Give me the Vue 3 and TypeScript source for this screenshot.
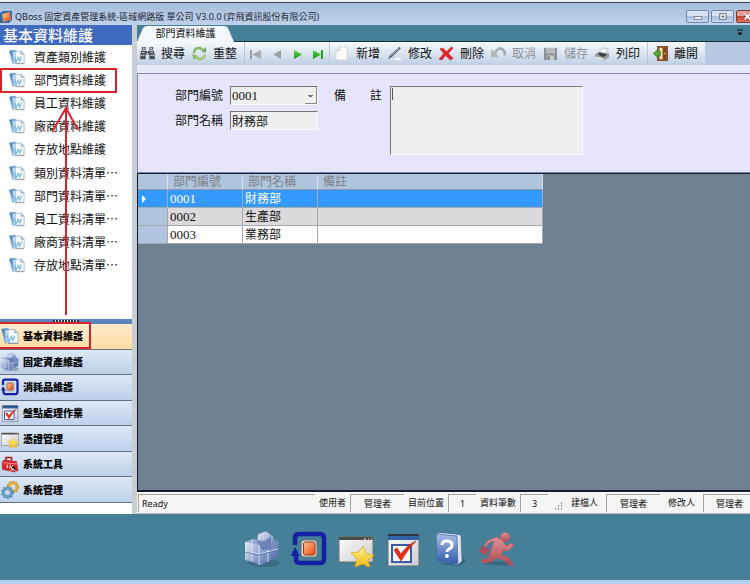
<script setup lang="ts">
import { ref } from 'vue'

interface Tool { icon: string; label: string; disabled?: boolean }
interface Section { icon: string; label: string }
interface Department { code: string; name: string; note: string }

const pages: string[] = [
  '資產類別維護', '部門資料維護', '員工資料維護', '廠商資料維護', '存放地點維護',
  '類別資料清單…', '部門資料清單…', '員工資料清單…', '廠商資料清單…', '存放地點清單…',
]

const sections: Section[] = [
  { icon: 'docs', label: '基本資料維護' },
  { icon: 'cube', label: '固定資產維護' },
  { icon: 'loop', label: '消耗品維護' },
  { icon: 'check', label: '盤點處理作業' },
  { icon: 'star', label: '憑證管理' },
  { icon: 'toolbox', label: '系統工具' },
  { icon: 'gears', label: '系統管理' },
]

const findTools: Tool[] = [
  { icon: 'find', label: '搜尋' },
  { icon: 'refresh', label: '重整' },
]

const moveTools: Tool[] = [
  { icon: 'first', label: '第一筆', disabled: true },
  { icon: 'prev', label: '上一筆', disabled: true },
  { icon: 'next', label: '下一筆' },
  { icon: 'last', label: '最後一筆' },
]

const editTools: Tool[] = [
  { icon: 'new', label: '新增' },
  { icon: 'pen', label: '修改' },
  { icon: 'delete', label: '刪除' },
  { icon: 'undo', label: '取消', disabled: true },
  { icon: 'save', label: '儲存', disabled: true },
  { icon: 'print', label: '列印' },
]

const exitTools: Tool[] = [{ icon: 'door', label: '離開' }]

const dock: Section[] = [
  { icon: 'cube', label: '固定資產' },
  { icon: 'loop', label: '消耗品' },
  { icon: 'star', label: '憑證' },
  { icon: 'check', label: '盤點' },
  { icon: 'help', label: '說明' },
  { icon: 'run', label: '離開系統' },
]

const departments: Department[] = [
  { code: '0001', name: '財務部', note: '' },
  { code: '0002', name: '生產部', note: '' },
  { code: '0003', name: '業務部', note: '' },
]

const activeSection = ref(0)
const selected = ref(0)
</script>

<template>
  <div class="app">
    <svg class="sprite" width="0" height="0" aria-hidden="true">
      <defs>
        <linearGradient id="gBlue" x1="0" y1="0" x2="1" y2="1"><stop offset="0" stop-color="#e3ecfb" /><stop offset="1" stop-color="#7288bd" /></linearGradient>
        <linearGradient id="gBlueDark" x1="0" y1="0" x2="1" y2="1"><stop offset="0" stop-color="#a9bbe2" /><stop offset="1" stop-color="#45609c" /></linearGradient>
        <linearGradient id="gOrange" x1="0" y1="0" x2="1" y2="1"><stop offset="0" stop-color="#ffc29a" /><stop offset="1" stop-color="#ea4a10" /></linearGradient>
        <linearGradient id="gPane" x1="0" y1="0" x2="1" y2="1"><stop offset="0" stop-color="#ffffff" /><stop offset="1" stop-color="#c9cacd" /></linearGradient>
        <linearGradient id="gBook" x1="0" y1="0" x2="0" y2="1"><stop offset="0" stop-color="#a6bfe6" /><stop offset="1" stop-color="#2f5ba6" /></linearGradient>
        <linearGradient id="gRed" x1="0" y1="0" x2="0" y2="1"><stop offset="0" stop-color="#df9298" /><stop offset="1" stop-color="#ae4750" /></linearGradient>
        <linearGradient id="gStar" x1="0" y1="0" x2="0" y2="1"><stop offset="0" stop-color="#fff59a" /><stop offset="1" stop-color="#f3b707" /></linearGradient>
        <linearGradient id="gGreen" x1="0" y1="0" x2="0" y2="1"><stop offset="0" stop-color="#63d84a" /><stop offset="1" stop-color="#17950f" /></linearGradient>
        <linearGradient id="gDoc" x1="0" y1="0" x2="1" y2="1"><stop offset="0" stop-color="#2d73b6" /><stop offset="1" stop-color="#b9def5" /></linearGradient>
      </defs>
      <symbol id="docs" viewBox="0 0 36 36">
        <path d="M1 4 13 2l4 3-6 27-3 1z" fill="url(#gDoc)" stroke="#7faed3" />
        <path d="M8 6h12v25H11z" fill="#cfe4f4" stroke="#86aed0" />
        <path d="M14 5h13l7 7v20H14z" fill="#f5fafe" stroke="#8ba6bd" stroke-width="1.5" />
        <path d="M27 5v7h7z" fill="#abc5da" stroke="#8ba6bd" />
        <path d="m12 17 4 12 5-10 3 8 4-10" fill="none" stroke="#72b4e3" stroke-width="2.5" />
        <path d="M14 33h20" stroke="#8e9aa4" stroke-width="2" />
      </symbol>
      <symbol id="cube" viewBox="0 0 36 36">
        <ellipse cx="20" cy="32" rx="16" ry="4" fill="#234a5c" opacity=".35" />
        <path d="m1 11 8-3 10 2 8-3 8 4-1 15-18 8L1 29z" fill="url(#gBlueDark)" />
        <path d="m1 11 14 3v18L1 29z" fill="url(#gBlue)" />
        <path d="m15 14 19-4v16l-18 8z" fill="url(#gBlueDark)" />
        <path d="m14 3 8-3 8 6-3 13-9-2-5-8z" fill="url(#gBlue)" stroke="#6478a7" stroke-width=".6" />
        <path d="m13 9 8 1 6-5v12l-9 2z" fill="#5c76ad" opacity=".75" />
        <path d="m1 20 14 3 19-5M8 9v21M15 14v20M24 19v12" fill="none" stroke="#dfe7f7" stroke-width=".9" />
        <path d="m1 21 14 3 19-5" fill="none" stroke="#536b9d" stroke-width=".7" />
      </symbol>
      <symbol id="loop" viewBox="0 0 36 36">
        <path d="M4 14V7q0-4 4-4h21q4 0 4 4v21q0 4-4 4H9q-4 0-4-4v-4" fill="none" stroke="#1420a4" stroke-width="4.5" />
        <path d="m4 16 5 9H0z" fill="#1420a4" />
        <rect x="10" y="9" width="16" height="17" rx="3" fill="#d6dcd9" stroke="#68777a" />
        <rect x="12.5" y="11" width="11.5" height="13" rx="2" fill="url(#gOrange)" stroke="#9b3915" />
      </symbol>
      <symbol id="star" viewBox="0 0 36 36">
        <path d="M1 6h34v25H1z" fill="url(#gPane)" stroke="#77726a" />
        <path d="M1 6h34v3H1z" fill="#4e4c49" />
        <path d="M26 8h2m2 0h1m2 0h1" stroke="#fff" />
        <path d="m25 15 3 8 8 1-6 5 2 8-7-4-8 3 2-8-6-6 8-1z" fill="url(#gStar)" stroke="#d9a71b" stroke-width=".8" />
      </symbol>
      <symbol id="check" viewBox="0 0 36 36">
        <path d="M3 4h31v31H3z" fill="url(#gPane)" stroke="#606d7a" />
        <path d="M3 4h31v5H3z" fill="#2f65a6" /><path d="M3 3h31v2H3z" fill="#303845" />
        <path d="M7 14h19v17H7z" fill="#fbfbff" stroke="#3e59a5" stroke-width="2" />
        <path d="m9 19 3-2 4 6Q22 14 31 10q-8 8-15 20z" fill="#e62d17" stroke="#a51f13" stroke-width=".6" />
      </symbol>
      <symbol id="help" viewBox="0 0 36 36">
        <path d="m8 33 20 2 6-5-2-3z" fill="#1e4655" opacity=".45" />
        <path d="m4 3 8-1 17 2 1 26-4 4-4-1z" fill="#eef3fa" stroke="#4a68a4" stroke-width=".8" />
        <path d="m4 3 3-1 20 2-2 1z" fill="#dce6f4" />
        <path d="m4 3 21 2 1 28-21-3z" fill="url(#gBook)" stroke="#416aa9" stroke-width=".8" />
        <path d="M28 6v25" stroke="#a7b6cd" stroke-width=".6" />
        <path d="M10 14q0-4 5-4t5 4q0 3-3 4-2 1-2 3" fill="none" stroke="#fff" stroke-width="3" /><circle cx="15" cy="25" r="1.9" fill="#fff" />
      </symbol>
      <symbol id="run" viewBox="0 0 36 36">
        <path d="m2 33 10-3 22 1-4 4z" fill="#28475a" opacity=".4" />
        <circle cx="26" cy="6" r="4.5" fill="url(#gRed)" stroke="#ba6d75" stroke-width=".6" />
        <path d="m10 9 8-3 6 4 3 5 5-3 3 2-6 6-5-1-2 5 7 2 4 6 1 3-4-1-5-5-8-2-5 4-8 1-2-3 7-1 4-12 2-6-4 1-4 5-2-2z" fill="url(#gRed)" stroke="#b85a64" stroke-width=".8" />
        <path d="m3 15 7 3-3 6-7-3z" fill="#b44d57" />
      </symbol>
      <symbol id="toolbox" viewBox="0 0 36 36">
        <path d="M10 11V5h11v6" fill="none" stroke="#9c1b20" stroke-width="3" />
        <path d="m2 14 5-4 24 3 3 18-5 3-26-5z" fill="#d9262d" stroke="#8d1018" />
        <path d="m3 15 29 3" stroke="#ff8b80" stroke-width="2" />
        <path d="m12 19 1 7m6-7-2 8m8-7-5 6 11 7m-6-7-6 6" stroke="#eee" stroke-width="2" />
      </symbol>
      <symbol id="gears" viewBox="0 0 36 36">
        <circle cx="24" cy="12" r="8" fill="none" stroke="#dfb443" stroke-width="6" />
        <circle cx="24" cy="12" r="11" fill="none" stroke="#cc9b2f" stroke-width="3" stroke-dasharray="4 3" />
        <circle cx="13" cy="23" r="8" fill="none" stroke="#6ba0c6" stroke-width="6" />
        <circle cx="13" cy="23" r="11" fill="none" stroke="#4b83ac" stroke-width="3" stroke-dasharray="4 3" />
      </symbol>
      <symbol id="find" viewBox="0 0 16 16">
        <path d="M2 1h4v3H2zm8 0h4v3h-4zM1 5h6l1 2 1-2h6l1 9h-6V9H6v5H0z" fill="#4c5058" />
        <path d="M1 10h4M11 10h4M2 7h3m6 0h3M7 8h2" stroke="#c7ccd2" /><circle cx="4" cy="2.5" r="1" fill="#ddd" /><circle cx="12" cy="2.5" r="1" fill="#ddd" />
      </symbol>
      <symbol id="refresh" viewBox="0 0 16 16">
        <path d="M2 8Q2 2 8 2l4 2" fill="none" stroke="#8dbb73" stroke-width="3" /><path d="m10 6 5 1V1z" fill="#74a95b" />
        <path d="M14 9q-1 5-6 5l-4-2" fill="none" stroke="#a2ca7e" stroke-width="3" /><path d="M6 10 0 9l2 6z" fill="#8abb60" />
      </symbol>
      <symbol id="first" viewBox="0 0 16 16"><path d="M3 4v9" stroke="#9a9da1" stroke-width="2" /><path d="M13 4v9L4 8.5z" fill="#a9abae" /></symbol>
      <symbol id="prev" viewBox="0 0 16 16"><path d="M12 4v9L4 8.5z" fill="#9da1a5" /></symbol>
      <symbol id="next" viewBox="0 0 16 16"><path d="M4 4v9l8-4.5z" fill="url(#gGreen)" /></symbol>
      <symbol id="last" viewBox="0 0 16 16"><path d="M2 4v9l8-4.5z" fill="url(#gGreen)" /><path d="M11 4v9" stroke="#22a51a" stroke-width="2" /></symbol>
      <symbol id="new" viewBox="0 0 16 16"><path d="M5 1h8v14H1V5z" fill="#fcfcfa" stroke="#d3d5d8" /><path d="M5 1v4H1" fill="#e5e5e5" stroke="#c8c8c8" /></symbol>
      <symbol id="pen" viewBox="0 0 16 16"><path d="M8 14h7" stroke="#fff" stroke-width="2" /><path d="m1 14 2-4L13 1l2 1-9 9z" fill="#4f5966" /><path d="M4 11 13 2" stroke="#bbc5d0" /></symbol>
      <symbol id="delete" viewBox="0 0 16 16"><path d="m1 3 3-1 4 4 5-5 2 1-5 6 5 5-3 2-5-5-4 5-3-1 5-6z" fill="#e32529" stroke="#a81c22" stroke-width=".5" /></symbol>
      <symbol id="undo" viewBox="0 0 16 16"><path d="M4 8Q7 2 11 3q4 1 4 7" fill="none" stroke="#a9adaf" stroke-width="3" /><path d="M0 3v9h9z" fill="#b5b8b8" /></symbol>
      <symbol id="save" viewBox="0 0 16 16"><path d="M1 2h14v13H1z" fill="#8b8e92" /><path d="M3 2h10v6H3z" fill="#b8babc" /><path d="M4 10h8v5H4z" fill="#c7c8ca" /><path d="M5 11h2v4H5z" fill="#777" /></symbol>
      <symbol id="print" viewBox="0 0 16 16"><path d="m4 7 4-5 6 1-3 6z" fill="#f7f7f7" stroke="#999" stroke-width=".6" /><path d="m0 9 4-3 11 2v4l-5 3-10-3z" fill="#9a9da0" /><path d="m3 9 2-2 8 2-4 3z" fill="#3d4145" /><path d="m1 12 8 2" stroke="#eee" stroke-width="1.5" /></symbol>
      <symbol id="door" viewBox="0 0 16 16"><path d="M5 0h11v16H5z" fill="#9b6038" stroke="#5e3821" /><path d="M7 2h3v12H7z" fill="#fae3aa" /><path d="M11 2h3v12h-3z" fill="#7a472b" /><path d="M12 8h1" stroke="#ffd45a" stroke-width="2" /><path d="M5 4v2h3v4H5v2L0 8z" fill="#54ab35" stroke="#2b7821" stroke-width=".6" /></symbol>
    </svg>

    <header class="titlebar">
      <svg class="logo" viewBox="0 0 12 12" aria-hidden="true">
        <path d="M0 2 3 0h9v9l-3 3H0z" fill="#2f6ca6" /><path d="m2 3 8-2 1 8-8 2z" fill="url(#gOrange)" /><path d="m3 4 5-2-3 6z" fill="#ffad54" />
      </svg>
      <h1>QBoss 固定資產管理系統-區域網路版 單公司 V3.0.0 (弈飛資訊股份有限公司)</h1>
      <div class="window-buttons">
        <button type="button" aria-label="最小化"><svg viewBox="0 0 22 12"><rect x="7.5" y="6" width="8" height="3" fill="#fff" stroke="#59687b" stroke-width=".8" /></svg></button>
        <button type="button" aria-label="最大化"><svg viewBox="0 0 22 12"><rect x="8" y="3" width="7" height="6" fill="#fff" stroke="#59687b" /><path d="M10 5h3v2h-3z" fill="#59687b" /></svg></button>
        <button type="button" class="close" aria-label="關閉"><svg viewBox="0 0 22 12"><path d="m8 3 6 6m0-6-6 6" stroke="#6a3a3b" stroke-width="3" /><path d="m8 3 6 6m0-6-6 6" stroke="#fff" stroke-width="2" /></svg></button>
      </div>
    </header>

    <div class="body">
      <aside class="sidebar">
        <h2>基本資料維護</h2>
        <nav class="pages">
          <a v-for="page in pages" :key="page" href="#">
            <svg aria-hidden="true"><use href="#docs" /></svg>{{ page }}
          </a>
        </nav>
        <div class="grabber"></div>
        <nav class="sections">
          <button
            v-for="(section, i) in sections"
            :key="section.label"
            type="button"
            :class="{ active: i === activeSection }"
            @click="activeSection = i"
          >
            <svg aria-hidden="true"><use :href="'#' + section.icon" /></svg>{{ section.label }}
          </button>
        </nav>
      </aside>

      <main class="content">
        <div class="tabs">
          <button type="button" class="tab">
            <svg class="tab-shape" viewBox="0 0 96 17" preserveAspectRatio="none" aria-hidden="true"><path d="M0 17 6 3Q7 1 10 1h76q3 0 4 2l6 14z" fill="#f4f8fc" /></svg>
            <span>部門資料維護</span>
          </button>
          <svg class="tab-menu" viewBox="0 0 8 8" aria-hidden="true"><path d="M1 1h6M2 4h4L4 6z" stroke="#111" fill="#111" /></svg>
        </div>

        <div class="toolbar-row">
          <div class="toolbar" role="toolbar">
            <div class="group">
              <button v-for="t in findTools" :key="t.label" type="button" class="tool">
                <svg aria-hidden="true"><use :href="'#' + t.icon" /></svg>{{ t.label }}
              </button>
            </div>
            <div class="group">
              <button v-for="t in moveTools" :key="t.label" type="button" class="move" :aria-label="t.label" :disabled="t.disabled">
                <svg aria-hidden="true"><use :href="'#' + t.icon" /></svg>
              </button>
            </div>
            <div class="group wide">
              <button v-for="t in editTools" :key="t.label" type="button" class="tool" :disabled="t.disabled">
                <svg aria-hidden="true"><use :href="'#' + t.icon" /></svg>{{ t.label }}
              </button>
            </div>
            <div class="group wide">
              <button v-for="t in exitTools" :key="t.label" type="button" class="tool">
                <svg aria-hidden="true"><use :href="'#' + t.icon" /></svg>{{ t.label }}
              </button>
            </div>
          </div>
        </div>

        <form class="record" @submit.prevent>
          <div class="fields">
            <label for="code">部門編號</label>
            <select id="code"><option>0001</option></select>
            <label for="name">部門名稱</label>
            <input id="name" type="text" value="財務部" readonly />
          </div>
          <div class="note">
            <label for="note">備　　註</label>
            <div class="note-box">
              <textarea id="note" readonly></textarea>
              <span class="caret"></span>
            </div>
          </div>
        </form>

        <section class="records">
          <table>
            <colgroup><col class="c-mark" /><col class="c-code" /><col class="c-name" /><col class="c-note" /></colgroup>
            <thead>
              <tr><th></th><th>部門編號</th><th>部門名稱</th><th>備註</th></tr>
            </thead>
            <tbody>
              <tr v-for="(d, i) in departments" :key="d.code" :class="{ selected: i === selected }" @click="selected = i">
                <th scope="row"><svg v-if="i === selected" viewBox="0 0 4 8" aria-hidden="true"><path d="M0 0v8l4-4z" fill="#fff" /></svg></th>
                <td class="num">{{ d.code }}</td>
                <td>{{ d.name }}</td>
                <td>{{ d.note }}</td>
              </tr>
            </tbody>
          </table>
        </section>

        <footer class="status">
          <span class="panel ready">Ready</span>
          <span>使用者</span><span class="panel user">管理者</span>
          <span>目前位置</span><span class="panel count">1</span>
          <span>資料筆數</span><span class="panel count">3</span>
          <svg class="grip" viewBox="0 0 9 9" aria-hidden="true"><path d="M7 1h2M4 4h2m1 0h2M1 7h2m1 0h2m1 0h2" stroke="#8d8d8d" stroke-width="2" stroke-dasharray="1 2" /></svg>
          <span class="signer">建檔人</span><span class="panel user">管理者</span>
          <span class="signer">修改人</span><span class="panel user last">管理者</span>
        </footer>
      </main>
    </div>

    <nav class="dock">
      <button v-for="item in dock" :key="item.label" type="button" :aria-label="item.label">
        <svg aria-hidden="true"><use :href="'#' + item.icon" /></svg>
      </button>
    </nav>

    <svg class="marks" width="120" height="350" viewBox="0 0 120 350" aria-hidden="true">
      <g fill="none" stroke="#d8222c" stroke-width="2">
        <path d="M1 69h115v23H1zM-2 323h92v25H-2zM66 315V109M52 132l14-24 12 22" />
      </g>
    </svg>
  </div>
</template>

<style>
body {
  margin: 0;
}
</style>

<style scoped>
.app {
  position: relative;
  display: flex;
  flex-direction: column;
  min-height: 100vh;
  overflow: hidden;
  box-sizing: border-box;
  border-bottom: 4px solid #b5d0ef;
  background: #457f98;
  color: #111;
  font-family: "Noto Sans", "Noto Sans CJK TC", sans-serif;
  font-size: 12px;
  line-height: 16px;
}
.app *,
.app *::before {
  box-sizing: border-box;
}
.sprite {
  position: absolute;
}
svg {
  display: block;
  flex: none;
}
button {
  margin: 0;
  padding: 0;
  border: 0;
  background: none;
  color: inherit;
  font: inherit;
}
.marks {
  position: absolute;
  left: 0;
  top: 0;
  pointer-events: none;
}

/* title bar */
.titlebar {
  display: flex;
  align-items: center;
  height: 25px;
  padding-top: 6px;
  border-top: 2px solid #eef1f4;
  background: linear-gradient(#3d4656 1px, #a6bedb 1px, #bfd3eb);
}
.logo {
  width: 12px;
  height: 12px;
  margin-right: 3px;
}
h1 {
  flex: 1;
  margin: 0;
  overflow: hidden;
  color: #1d2733;
  font-size: 9px;
  font-weight: 400;
  line-height: 14px;
  white-space: nowrap;
}
.window-buttons {
  display: flex;
  gap: 2px;
  margin-right: -9px;
}
.window-buttons button {
  width: 23px;
  height: 13px;
  border: 1px solid #718aab;
  border-radius: 2px;
  background: linear-gradient(#d5e2f1 50%, #a9bfda 50%, #c6d8ec);
}
.window-buttons .close {
  border-color: #7c3a38;
  background: linear-gradient(#e2a095 50%, #c34832 50%, #d8745d);
}
.window-buttons svg {
  width: 100%;
  height: 100%;
}

/* main split */
.body {
  flex: 1;
  display: flex;
}
.sidebar {
  flex: none;
  display: flex;
  flex-direction: column;
  width: 132px;
  padding-bottom: 11px;
  background: #fff;
}
h2 {
  height: 20px;
  margin: 0;
  padding-left: 3px;
  background: #406ac0;
  color: #fff;
  font-size: 15px;
  font-weight: 500;
  line-height: 20px;
}
.pages {
  flex: 1;
  display: grid;
  grid-template-rows: repeat(10, 1fr);
  padding-bottom: 42px;
}
.pages a {
  display: flex;
  align-items: center;
  gap: 9px;
  padding-left: 9px;
  color: #111;
  font-family: "Noto Sans CJK TC", sans-serif;
  text-decoration: none;
  white-space: nowrap;
}
.pages svg {
  width: 16px;
  height: 16px;
}
.grabber {
  display: flex;
  justify-content: center;
  height: 5px;
  background: #5b85bb;
}
.grabber::before {
  content: "";
  width: 26px;
  height: 2px;
  margin-top: 1px;
  background: repeating-linear-gradient(90deg, #1d3557 0 2px, #dbe6f5 2px 3px);
}
.sections {
  display: grid;
  grid-template-rows: repeat(7, 1fr);
  height: 179px;
}
.sections button {
  display: flex;
  align-items: center;
  gap: 4px;
  padding-left: 1px;
  border-bottom: 1px solid #66717f;
  background: linear-gradient(#dde8f6, #bdd0ea);
  color: #000;
  font-size: 10px;
  font-weight: 900;
}
.sections .active {
  background: linear-gradient(#ffecce, #ffdca6);
}
.sections svg {
  width: 18px;
  height: 18px;
}
.content {
  flex: 1;
  display: flex;
  flex-direction: column;
  min-width: 0;
  border-left: 5px solid #c9ced3;
}

/* document tabs */
.tabs {
  display: flex;
  justify-content: space-between;
  height: 17px;
  border-bottom: 1px solid #1c2b3a;
  background: #457f98;
}
.tab {
  display: grid;
  width: 97px;
  height: 17px;
  font-size: 10px;
  line-height: 17px;
}
.tab > * {
  grid-area: 1 / 1;
}
.tab-shape {
  width: 97px;
  height: 17px;
}
.tab-menu {
  width: 8px;
  height: 8px;
  margin: 4px 6px 0 0;
}

/* toolbar */
.toolbar-row {
  display: flex;
  height: 31px;
  padding-bottom: 8px;
  background: linear-gradient(#b7c8e0 23px, #e9e8fb 23px);
}
.toolbar {
  display: flex;
  padding-left: 3px;
  background: linear-gradient(#f7fafd, #c0cfe4);
}
.group {
  display: flex;
  align-items: center;
}
.group + .group {
  border-left: 1px solid #bcc6d3;
}
.group.wide {
  padding-left: 5px;
}
.tool {
  display: flex;
  align-items: center;
  gap: 6px;
  width: 52px;
  height: 22px;
  white-space: nowrap;
}
.tool svg {
  width: 15px;
  height: 15px;
}
.tool:disabled {
  color: #8b8f95;
}
.move {
  display: flex;
  align-items: center;
  justify-content: center;
  width: 21px;
  height: 22px;
}
.move svg {
  width: 16px;
  height: 16px;
}

/* record form */
.record {
  display: flex;
  align-items: flex-start;
  gap: 16px;
  height: 100px;
  padding: 12px 8px 0 37px;
  border: solid #8280c6;
  border-width: 1px 0 1px 1px;
  background: #e6e5fb;
}
.fields {
  display: grid;
  grid-template-columns: 48px 88px;
  grid-auto-rows: 19px;
  gap: 6px 7px;
  align-items: center;
}
.fields label,
.note label {
  white-space: nowrap;
}
select,
input,
textarea {
  display: block;
  width: 100%;
  height: 19px;
  margin: 0;
  padding: 0 1px;
  border: solid;
  border-width: 1px;
  border-color: #75767a #fafafa #fafafa #75767a;
  border-radius: 0;
  outline: 0;
  background: #eef0ef;
  color: #111;
  font-family: "Liberation Serif", "Noto Sans CJK TC", serif;
  font-size: 12px;
  line-height: 15px;
}
select {
  appearance: none;
  background:
    linear-gradient(#777, #777) right 4px top 8px / 5px 1px no-repeat,
    linear-gradient(#777, #777) right 5px top 9px / 3px 1px no-repeat,
    linear-gradient(#8a8a8a, #8a8a8a) right 0 bottom 0 / 1px 100% no-repeat,
    linear-gradient(#8a8a8a, #8a8a8a) right 0 bottom 0 / 12px 1px no-repeat,
    #eef0ef;
}
select,
.num {
  font-size: 13px;
}
.note {
  display: flex;
  gap: 8px;
}
.note label {
  line-height: 19px;
}
.note-box {
  position: relative;
  width: 193px;
}
.note textarea {
  height: 69px;
  resize: none;
}
.caret {
  position: absolute;
  left: 2px;
  top: 2px;
  width: 1px;
  height: 12px;
  background: #555;
}

/* records grid */
.records {
  flex: 1;
  border: solid #171d28;
  border-width: 1px 0 2px 1px;
  background: #6f8091;
}
table {
  width: 405px;
  border-collapse: separate;
  border-spacing: 0;
  table-layout: fixed;
}
.c-mark {
  width: 30px;
}
.c-code,
.c-name {
  width: 75px;
}
th,
td {
  height: 18px;
  padding: 0 2px;
  border: solid #a5a9b0;
  border-width: 0 1px 1px 0;
  font-weight: 400;
  line-height: 17px;
  text-align: left;
}
thead th {
  height: 16px;
  padding-left: 5px;
  border-color: #d8dfe9 #d8dfe9 #8d99aa;
  color: #7e8084;
  line-height: 15px;
}
th {
  background: #b0c4de;
}
tbody th svg {
  width: 4px;
  height: 8px;
  margin-left: 2px;
}
td {
  background: #fff;
}
tbody tr:nth-child(even) td {
  background: #dcdadc;
}
.selected th,
.selected td,
tbody .selected:nth-child(odd) td {
  background: #3399ff;
  color: #fff;
}
.num {
  font-family: "Liberation Serif", serif;
}

/* status bar */
.status {
  display: flex;
  align-items: center;
  gap: 4px;
  height: 22px;
  padding-left: 1px;
  border-bottom: 1px solid #b8bcc0;
  background: #f5f5f6;
  font-size: 9px;
  white-space: nowrap;
}
.panel {
  height: 18px;
  border: solid #a3a3a3;
  border-width: 1px 0 0 1px;
  line-height: 17px;
  text-align: center;
}
.ready {
  flex: 1;
  padding-left: 3px;
  text-align: left;
}
.user {
  width: 54px;
}
.user.last {
  width: 47px;
  padding-left: 5px;
}
.count {
  width: 28px;
}
.grip {
  width: 9px;
  height: 9px;
  margin: 8px 0 0 2px;
}
.signer {
  padding: 0 4px;
}

/* dock */
.dock {
  display: flex;
  align-items: center;
  justify-content: center;
  gap: 11px;
  height: 66px;
  padding: 4px 0 0 8px;
}
.dock svg {
  width: 36px;
  height: 36px;
}
</style>
